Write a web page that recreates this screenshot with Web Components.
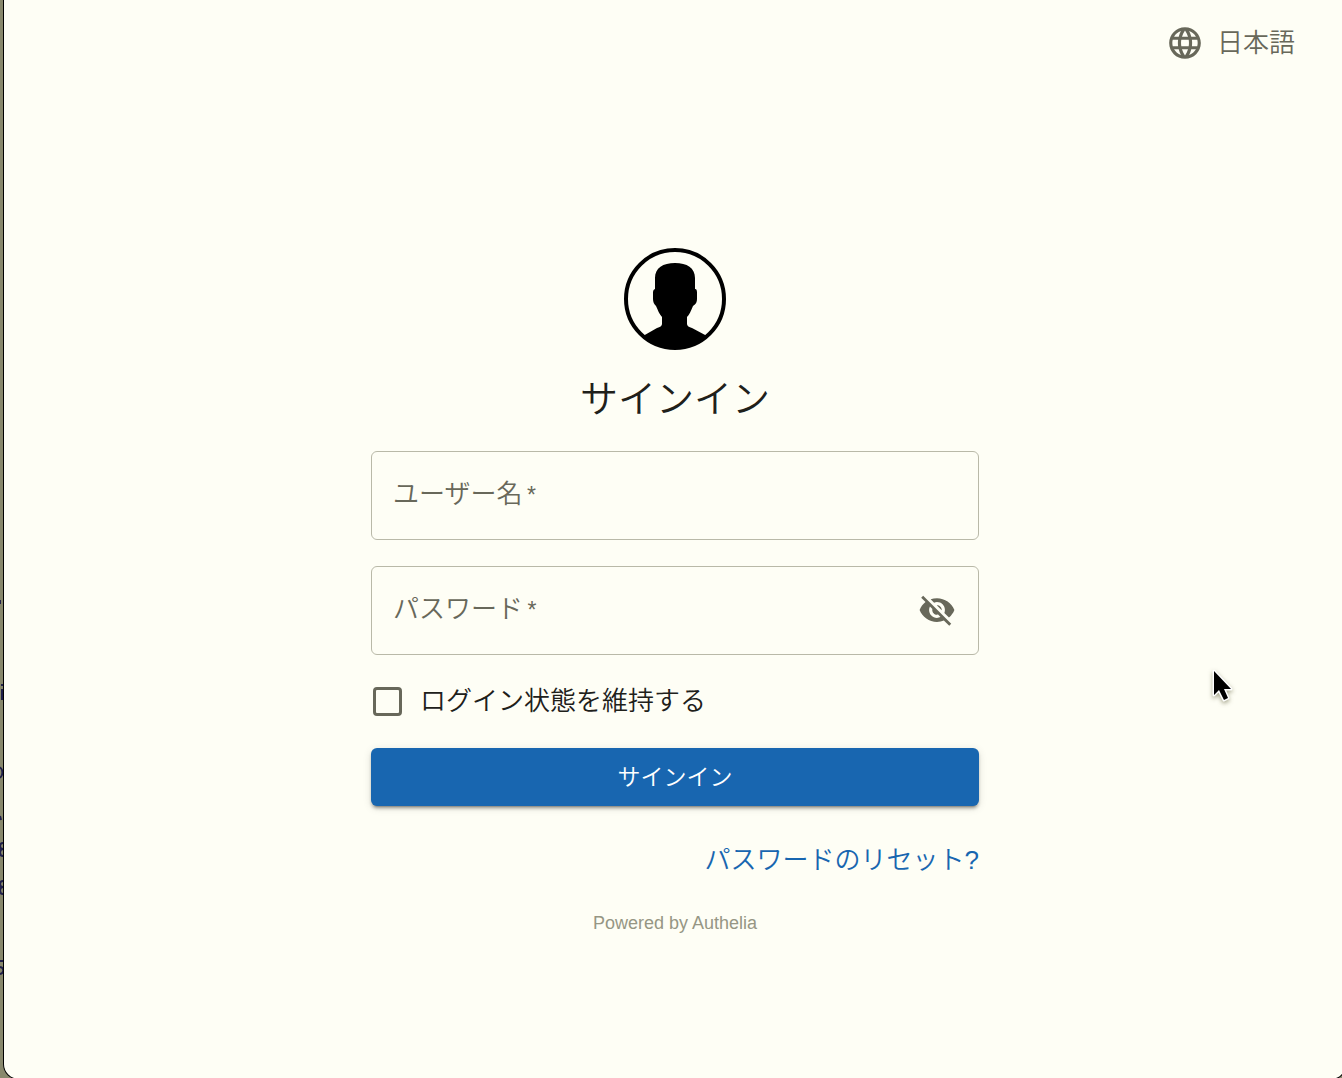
<!DOCTYPE html>
<html lang="ja">
<head>
<meta charset="utf-8">
<title>サインイン - Authelia</title>
<style>
  :root {
    --paper: #fefef5;
    --ink: #20201a;
    --muted: #68685a;
    --line: #b9b9a8;
    --primary: #1866b0;
  }
  body {
    margin: 0;
    background: #88886c;
    overflow: hidden;
    font-family: "Liberation Sans", "Noto Sans CJK JP", sans-serif;
    font-size: 26px;
    font-weight: 350;
    line-height: 40px;
    color: var(--ink);
  }
</style>
</head>
<body>
<app-window>
  <language-picker slot="header">日本語</language-picker>
  <login-form>
    <user-avatar slot="avatar"></user-avatar>
    <span slot="title">サインイン</span>
    <text-field label="ユーザー名" type="text"></text-field>
    <text-field label="パスワード" type="password" toggle></text-field>
    <check-option>ログイン状態を維持する</check-option>
    <primary-button>サインイン</primary-button>
    <form-links slot="footer"></form-links>
  </login-form>
</app-window>
<mouse-pointer></mouse-pointer>
<script>
  const define = (name, html, setup) => {
    const template = document.createElement('template');
    template.innerHTML = '<style>*{box-sizing:border-box}button,input{font:inherit}</style>' + html;
    customElements.define(name, class extends HTMLElement {
      constructor() {
        super();
        this.attachShadow({ mode: 'open' }).append(template.content.cloneNode(true));
      }
      connectedCallback() { if (setup) setup(this, this.shadowRoot); }
    });
  };

  define('app-window', `
    <style>
      :host { display: grid; grid-template-columns: 3px minmax(0, 1fr); min-height: calc(100vh + 2px); margin-right: -5px; }
      .behind { width: 20px; height: 100vh; display: block; grid-area: 1 / 1; }
      .window { grid-area: 1 / 2; background: var(--paper); border: 1px solid #000; border-top: 0;
        border-radius: 0 0 16px 16px; display: flex; flex-direction: column; position: relative; }
      header { display: flex; justify-content: flex-end; padding: 23px 51px; }
      main { display: flex; justify-content: center; padding: 162px 24px 24px; }
    </style>
    <svg class="behind" viewBox="0 0 20 1078" preserveAspectRatio="xMinYMin slice" fill="none" stroke="#20204a" stroke-width="2" aria-hidden="true">
      <path d="M0 600v4M2 684v2M2 689v11M-2 767a4 5 0 0 1 0 11M0 816l1 4M3 843c-4 0-4 6 0 6c-4 0-4 7 0 7M3 881c-4 0-4 6 0 6c-4 0-4 7 0 7M-2 961h6M0 967c5 1 4 7-1 7"/>
    </svg>
    <div class="window">
      <header><slot name="header"></slot></header>
      <main><slot></slot></main>
    </div>`);

  define('language-picker', `
    <style>
      :host { display: block; }
      button { display: flex; align-items: center; gap: 13px; padding: 0; border: 0; background: none; color: var(--muted); cursor: pointer; }
      svg { width: 38px; height: 38px; fill: currentColor; }
    </style>
    <button type="button">
      <svg viewBox="0 0 24 24" aria-hidden="true"><path d="M11.99 2C6.47 2 2 6.48 2 12s4.47 10 9.99 10C17.52 22 22 17.52 22 12S17.52 2 11.99 2zm6.93 6h-2.95c-.32-1.25-.78-2.45-1.38-3.56 1.84.63 3.37 1.91 4.33 3.56zM12 4.04c.83 1.2 1.48 2.53 1.91 3.96h-3.82c.43-1.43 1.08-2.76 1.91-3.96zM4.26 14C4.1 13.36 4 12.69 4 12s.1-1.36.26-2h3.38c-.08.66-.14 1.32-.14 2s.06 1.34.14 2H4.26zm.82 2h2.95c.32 1.25.78 2.45 1.38 3.56-1.84-.63-3.37-1.9-4.33-3.56zm2.95-8H5.08c.96-1.66 2.49-2.93 4.33-3.56C8.81 5.55 8.35 6.75 8.03 8zM12 19.96c-.83-1.2-1.48-2.53-1.91-3.96h3.82c-.43 1.43-1.08 2.76-1.91 3.96zM14.34 14H9.66c-.09-.66-.16-1.32-.16-2s.07-1.35.16-2h4.68c.09.65.16 1.32.16 2s-.07 1.34-.16 2zm.25 5.56c.6-1.11 1.06-2.31 1.38-3.56h2.95c-.96 1.65-2.49 2.93-4.33 3.56zM16.36 14c.08-.66.14-1.32.14-2s-.06-1.34-.14-2h3.38c.16.64.26 1.31.26 2s-.1 1.36-.26 2h-3.38z"/></svg>
      <span><slot></slot></span>
    </button>`);

  define('user-avatar', `
    <style>
      :host { display: block; }
      svg { display: block; width: 102px; height: 102px; }
    </style>
    <svg viewBox="0 0 102 102" aria-hidden="true">
      <defs><clipPath id="disc"><circle cx="51" cy="51" r="50"/></clipPath></defs>
      <circle cx="51" cy="51" r="49" fill="none" stroke="#000" stroke-width="4"/>
      <path clip-path="url(#disc)" d="M31 41V30c0-10 8-15 20-15s20 5 20 15v11c2 0 2 2 2 5v5c0 3-1 5-4 7-2 5-4 9-6 11v7c0 2 2 3 5 4l15 8v14H19V88l14-8c3-1 5-2 5-4v-7c-3-3-4-7-6-11-2-2-3-4-3-7v-5c0-3 0-4 2-5z"/>
    </svg>`);

  define('login-form', `
    <style>
      :host { display: block; width: 608px; max-width: 100%; }
      form, .head { display: flex; flex-direction: column; }
      .head { align-items: center; gap: 21px; margin-bottom: 24px; }
      h1 { margin: 0; font-size: 38px; line-height: 56px; font-weight: inherit; }
    </style>
    <div class="head"><slot name="avatar"></slot><h1><slot name="title"></slot></h1></div>
    <form><slot></slot></form>
    <slot name="footer"></slot>`);

  define('text-field', `
    <style>
      :host { display: block; margin-bottom: 26px; }
      :host([toggle]) { margin-bottom: 15px; }
      .box { display: grid; grid-template-columns: minmax(0, 1fr) auto; align-items: center; height: 89px;
        border: 1px solid var(--line); border-radius: 6px; }
      .box:focus-within { border-color: var(--primary); }
      label { grid-area: 1 / 1; padding: 0 0 2px 21px; color: var(--muted); pointer-events: none; }
      label span { font-size: 23px; }
      input { grid-area: 1 / 1; width: 100%; height: 100%; padding: 0 21px; border: 0; outline: 0; background: none; color: inherit; }
      .box:focus-within label, input:valid + label { visibility: hidden; }
      button { grid-area: 1 / 2; display: flex; margin-right: 22px; padding: 0 0 2px; border: 0; background: none; color: var(--muted); cursor: pointer; }
      :host(:not([toggle])) button { display: none; }
      svg { width: 38px; height: 38px; fill: currentColor; }
    </style>
    <div class="box">
      <input id="field" required>
      <label for="field"></label>
      <button type="button" aria-label="パスワードを表示">
        <svg viewBox="0 0 24 24" aria-hidden="true"><path d="M12 7c2.76 0 5 2.24 5 5 0 .65-.13 1.26-.36 1.83l2.92 2.92c1.51-1.26 2.7-2.89 3.43-4.75-1.73-4.39-6-7.5-11-7.5-1.4 0-2.74.25-3.98.7l2.16 2.16C10.74 7.13 11.35 7 12 7zM2 4.27l2.28 2.28.46.46C3.08 8.3 1.78 10.02 1 12c1.73 4.39 6 7.5 11 7.5 1.55 0 3.03-.3 4.38-.84l.42.42L19.73 22 21 20.73 3.27 3 2 4.27zM7.53 9.8l1.55 1.55c-.05.21-.08.43-.08.65 0 1.66 1.34 3 3 3 .22 0 .44-.03.65-.08l1.55 1.55c-.67.33-1.41.53-2.2.53-2.76 0-5-2.24-5-5 0-.79.2-1.53.53-2.2zm4.31-.78l3.15 3.15.02-.16c0-1.66-1.34-3-3-3l-.17.01z"/></svg>
      </button>
    </div>`, (host, root) => {
      const input = root.querySelector('input');
      input.type = host.getAttribute('type');
      const star = document.createElement('span');
      star.textContent = '\u2009*';
      root.querySelector('label').replaceChildren(host.getAttribute('label'), star);
      root.querySelector('button').onclick = () => {
        input.type = input.type === 'password' ? 'text' : 'password';
      };
    });

  define('check-option', `
    <style>
      :host { display: flex; align-items: center; gap: 18px; height: 62px; padding-left: 2px; margin-bottom: 16px; }
      input { appearance: none; width: 29px; height: 29px; margin: 0; border: 3px solid var(--muted); border-radius: 4px; }
      input:checked { background: var(--primary); border-color: var(--primary); }
    </style>
    <input id="box" type="checkbox"><label for="box"><slot></slot></label>`);

  define('primary-button', `
    <style>
      :host { display: block; }
      button { display: block; width: 100%; height: 58px; padding: 0; border: 0; border-radius: 6px; background: var(--primary);
        color: #fff; font-size: 23px; cursor: pointer;
        box-shadow: 0 4px 2px -3px rgba(0,0,0,.3), 0 3px 3px rgba(0,0,0,.2), 0 2px 8px rgba(0,0,0,.12); }
    </style>
    <button type="submit"><slot></slot></button>`);

  define('form-links', `
    <style>
      :host { display: flex; flex-direction: column; gap: 31px; padding-top: 34px; }
      a { text-decoration: none; }
      .reset { align-self: flex-end; color: var(--primary); }
      .brand { align-self: center; font-size: 18px; line-height: 24px; font-weight: 400; color: #969684; }
    </style>
    <a class="reset" href="#reset">パスワードのリセット?</a>
    <a class="brand" href="#authelia">Powered by Authelia</a>`);

  define('mouse-pointer', `
    <style>
      :host { position: absolute; left: 1210px; top: 667px; pointer-events: none; }
      svg { display: block; width: 28px; height: 42px; overflow: visible; filter: drop-shadow(0 2px 2px rgba(80,80,40,.5)); }
    </style>
    <svg viewBox="0 0 28 42" aria-hidden="true"><path d="M4 4v24l5-5 5 10 4-2-4-9h7z" fill="#000" stroke="#fff" stroke-width="3" stroke-linejoin="round" paint-order="stroke"/></svg>`);
</script>
</body>
</html>
